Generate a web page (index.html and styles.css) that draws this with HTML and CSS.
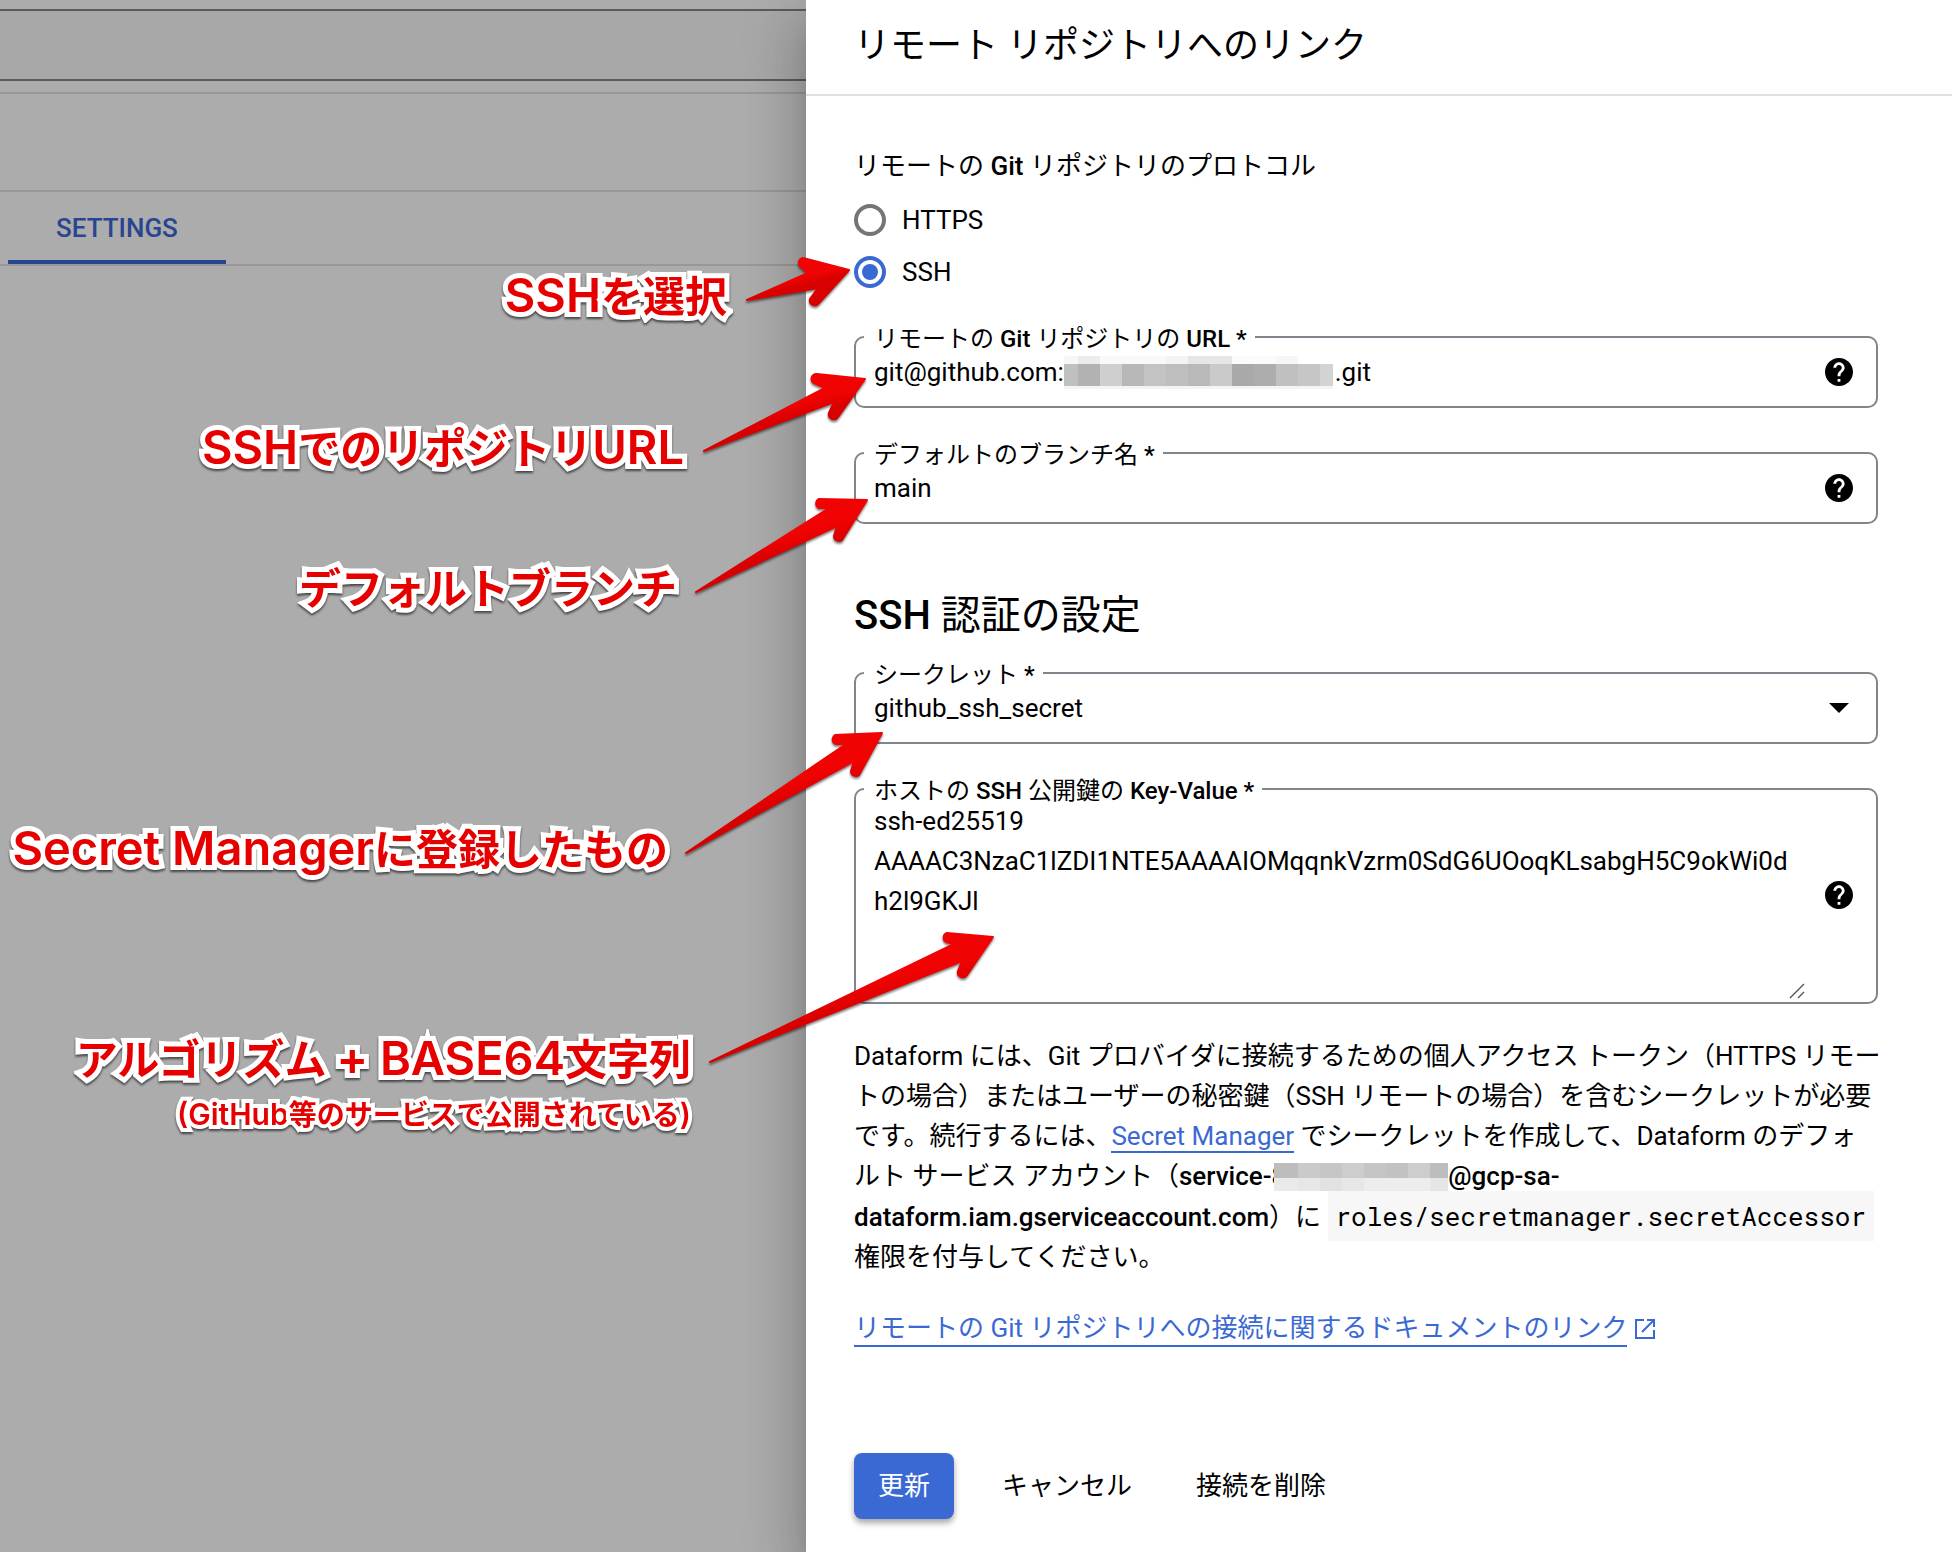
FILE: index.html
```html
<!DOCTYPE html>
<html lang="ja">
<head>
    <meta charset="UTF-8">
    <meta name="viewport" content="width=device-width, initial-scale=1.0">
    <title>リモート リポジトリへのリンク</title>
    <link rel="stylesheet" href="styles.css">
</head>
<body>
    <!-- Dimmed page behind the panel -->
    <main class="backdrop">
        <div class="search-row">
            <div class="search-box"></div>
        </div>
        <div class="toolbar"></div>
        <nav class="tabs">
            <a href="#" class="tab active">SETTINGS</a>
        </nav>

        <p class="note note-ssh"><span>SSH</span>を選択</p>
        <p class="note note-url"><span>SSH</span>でのリポジトリ<span>URL</span></p>
        <p class="note note-branch">デフォルトブランチ</p>
        <p class="note note-secret"><span>Secret Manager</span>に登録したもの</p>
        <p class="note note-key">アルゴリズム <span>+ BASE64</span>文字列</p>
        <p class="note note-key-sub"><span>(GitHub</span>等のサービスで公開されている<span>)</span></p>
    </main>

    <!-- Side panel -->
    <aside class="panel">
        <header class="panel-header">
            <h1>リモート リポジトリへのリンク</h1>
        </header>

        <form class="panel-body">
            <div class="protocol" role="radiogroup" aria-labelledby="protocol-label">
                <p id="protocol-label">リモートの <b>Git</b> リポジトリのプロトコル</p>
                <div class="radio">
                    <input type="radio" name="protocol" id="https">
                    <label for="https">HTTPS</label>
                </div>
                <div class="radio">
                    <input type="radio" name="protocol" id="ssh" checked>
                    <label for="ssh">SSH</label>
                </div>
            </div>

            <fieldset class="field">
                <legend><label for="repo-url">リモートの <b>Git</b> リポジトリの <b>URL *</b></label></legend>
                <div class="field-row">
                    <input type="text" id="repo-url" value="git@github.com:&nbsp;&nbsp;&nbsp;&nbsp;&nbsp;&nbsp;&nbsp;&nbsp;&nbsp;&nbsp;&nbsp;&nbsp;&nbsp;&nbsp;&nbsp;&nbsp;&nbsp;&nbsp;&nbsp;&nbsp;&nbsp;&nbsp;&nbsp;&nbsp;&nbsp;&nbsp;&nbsp;&nbsp;&nbsp;&nbsp;&nbsp;&nbsp;&nbsp;&nbsp;&nbsp;&nbsp;&nbsp;&nbsp;&nbsp;&nbsp;&nbsp;&nbsp;.git">
                    <svg class="mask mask-url" viewBox="0 0 269 33" shape-rendering="crispEdges" aria-hidden="true">
                        <rect width="14" height="8" fill="#f7f7f7"/>
                        <rect x="14" width="22" height="8" fill="#ececec"/>
                        <rect x="36" width="66" height="8" fill="#f9f9f9"/>
                        <rect x="102" width="22" height="8" fill="#f4f4f4"/>
                        <rect x="124" width="44" height="8" fill="#e6e6e6"/>
                        <rect x="168" width="44" height="8" fill="#fbfbfb"/>
                        <rect x="212" width="22" height="8" fill="#f6f6f6"/>
                        <rect y="30" width="269" height="3" fill="#f3f4f4"/>
                        <rect y="8" width="14" height="22" fill="#c0c0c0"/>
                        <rect x="14" y="8" width="22" height="22" fill="#b2b2b2"/>
                        <rect x="36" y="8" width="22" height="22" fill="#cfcfcf"/>
                        <rect x="58" y="8" width="22" height="22" fill="#b8b8b8"/>
                        <rect x="80" y="8" width="22" height="22" fill="#c3c3c3"/>
                        <rect x="102" y="8" width="22" height="22" fill="#bebebe"/>
                        <rect x="124" y="8" width="22" height="22" fill="#b9b9b9"/>
                        <rect x="146" y="8" width="22" height="22" fill="#cacaca"/>
                        <rect x="168" y="8" width="22" height="22" fill="#a9a9a9"/>
                        <rect x="190" y="8" width="22" height="22" fill="#adadad"/>
                        <rect x="212" y="8" width="22" height="22" fill="#c0c0c0"/>
                        <rect x="234" y="8" width="22" height="22" fill="#c6c6c6"/>
                        <rect x="256" y="8" width="13" height="22" fill="#d3d3d3"/>
                    </svg>
                    <button type="button" class="help" aria-label="ヘルプ">
                        <svg viewBox="2 2 20 20"><path d="M12 2C6.48 2 2 6.48 2 12s4.48 10 10 10 10-4.48 10-10S17.52 2 12 2zm1 17h-2v-2h2v2zm2.07-7.75l-.9.92C13.45 12.9 13 13.5 13 15h-2v-.5c0-1.1.45-2.1 1.17-2.83l1.24-1.26c.37-.36.59-.86.59-1.41 0-1.1-.9-2-2-2s-2 .9-2 2H8c0-2.21 1.79-4 4-4s4 1.79 4 4c0 .88-.36 1.68-.93 2.25z"/></svg>
                    </button>
                </div>
            </fieldset>

            <fieldset class="field">
                <legend><label for="branch">デフォルトのブランチ名 <b>*</b></label></legend>
                <div class="field-row">
                    <input type="text" id="branch" value="main">
                    <button type="button" class="help" aria-label="ヘルプ">
                        <svg viewBox="2 2 20 20"><path d="M12 2C6.48 2 2 6.48 2 12s4.48 10 10 10 10-4.48 10-10S17.52 2 12 2zm1 17h-2v-2h2v2zm2.07-7.75l-.9.92C13.45 12.9 13 13.5 13 15h-2v-.5c0-1.1.45-2.1 1.17-2.83l1.24-1.26c.37-.36.59-.86.59-1.41 0-1.1-.9-2-2-2s-2 .9-2 2H8c0-2.21 1.79-4 4-4s4 1.79 4 4c0 .88-.36 1.68-.93 2.25z"/></svg>
                    </button>
                </div>
            </fieldset>

            <h2><b>SSH</b> 認証の設定</h2>

            <fieldset class="field">
                <legend><label for="secret">シークレット <b>*</b></label></legend>
                <div class="field-row">
                    <select id="secret">
                        <option>github_ssh_secret</option>
                    </select>
                    <svg class="caret" viewBox="0 0 20 10" aria-hidden="true"><path d="M0 0h20L10 10z"/></svg>
                </div>
            </fieldset>

            <fieldset class="field field-area">
                <legend><label for="host-key">ホストの <b>SSH</b> 公開鍵の <b>Key-Value *</b></label></legend>
                <div class="field-row">
                    <textarea id="host-key" spellcheck="false">ssh-ed25519 AAAAC3NzaC1lZDI1NTE5AAAAIOMqqnkVzrm0SdG6UOoqKLsabgH5C9okWi0dh2l9GKJl</textarea>
                    <svg class="grip" viewBox="0 0 16 16" aria-hidden="true"><path d="M1 15L15 1M9 15L15 9" stroke="#555555" stroke-width="1.4"/></svg>
                    <button type="button" class="help" aria-label="ヘルプ">
                        <svg viewBox="2 2 20 20"><path d="M12 2C6.48 2 2 6.48 2 12s4.48 10 10 10 10-4.48 10-10S17.52 2 12 2zm1 17h-2v-2h2v2zm2.07-7.75l-.9.92C13.45 12.9 13 13.5 13 15h-2v-.5c0-1.1.45-2.1 1.17-2.83l1.24-1.26c.37-.36.59-.86.59-1.41 0-1.1-.9-2-2-2s-2 .9-2 2H8c0-2.21 1.79-4 4-4s4 1.79 4 4c0 .88-.36 1.68-.93 2.25z"/></svg>
                    </button>
                </div>
            </fieldset>

            <p class="description">Dataform には、Git プロバイダに接続するための個人アクセス トークン（HTTPS リモートの場合）またはユーザーの秘密鍵（SSH リモートの場合）を含むシークレットが必要です。続行するには、<a href="#">Secret Manager</a> でシークレットを作成して、Dataform のデフォルト サービス アカウント（<b>service-8<svg class="mask mask-account" viewBox="0 0 174 28" shape-rendering="crispEdges" aria-hidden="true">
                <rect width="24" height="15" fill="#bdbdbd"/>
                <rect x="24" width="22" height="15" fill="#cacaca"/>
                <rect x="46" width="22" height="15" fill="#c6c6c6"/>
                <rect x="68" width="22" height="15" fill="#cdcdcd"/>
                <rect x="90" width="22" height="15" fill="#c5c5c5"/>
                <rect x="112" width="22" height="15" fill="#c2c2c2"/>
                <rect x="134" width="22" height="15" fill="#cdcdcd"/>
                <rect x="156" width="18" height="15" fill="#bdbdbd"/>
                <rect y="15" width="24" height="13" fill="#eaeaea"/>
                <rect x="24" y="15" width="22" height="13" fill="#e7e7e7"/>
                <rect x="46" y="15" width="22" height="13" fill="#e2e2e2"/>
                <rect x="68" y="15" width="22" height="13" fill="#e7e7e7"/>
                <rect x="90" y="15" width="66" height="13" fill="#ededed"/>
                <rect x="156" y="15" width="18" height="13" fill="#e6e6e6"/>
            </svg>@gcp-sa-dataform.iam.gserviceaccount.com</b>）に <code>roles/secretmanager.secretAccessor</code> 権限を付与してください。</p>

            <p class="doc-link">
                <a href="#">リモートの Git リポジトリへの接続に関するドキュメントのリンク</a>
                <svg viewBox="0 0 20 20" aria-hidden="true"><path d="M9 1H1v18h18v-8M12 1h7v7M19 1L7 13" fill="none" stroke="currentColor" stroke-width="2"/></svg>
            </p>

            <div class="actions">
                <button type="submit" class="btn btn-primary">更新</button>
                <button type="button" class="btn">キャンセル</button>
                <button type="button" class="btn">接続を削除</button>
            </div>
        </form>
    </aside>

    <!-- Arrows from the notes to the fields -->
    <svg class="arrows" width="1010" height="1080" viewBox="0 0 1010 1080" aria-hidden="true">
        <defs>
            <linearGradient id="red" x1="0.4" y1="0.3" x2="0.6" y2="0.7">
                <stop offset="0.3" stop-color="#f20303"/>
                <stop offset="0.7" stop-color="#d90000"/>
            </linearGradient>
        </defs>
        <path d="M747 300L808 273L801 267A5 5 0 0 1 803 258L849 270L819 303A5 5 0 0 1 810 299L818 288Z"/>
        <path d="M704 451L825 388L816 384A5 5 0 0 1 817 374L865 379L838 417A5 5 0 0 1 829 413L834 402Z"/>
        <path d="M696 592L829 508L819 508A5 5 0 0 1 819 499L867 500L842 540A5 5 0 0 1 834 536L837 526Z"/>
        <path d="M686 853L846 744L836 744A5 5 0 0 1 835 735L882 733L859 775A5 5 0 0 1 851 771L854 761Z"/>
        <path d="M710 1062L954 944L946 942A5 5 0 0 1 947 933L993 937L967 975A5 5 0 0 1 958 971L962 961Z"/>
    </svg>
</body>
</html>
```

FILE: styles.css
```css
/* General Reset */
* {
    margin: 0;
    padding: 0;
    box-sizing: border-box;
}

body {
    position: relative;
    display: flex;
    min-height: 100vh;
    font-family: Roboto, "Noto Sans CJK JP", sans-serif;
    font-size: 26px;
    line-height: 40px;
    color: #000000;
    background: #acacac;
    overflow-x: hidden;
}

b {
    font-weight: 500;
}

a {
    color: #3b69d3;
    text-decoration: none;
    border-bottom: 2px solid #3b69d3;
}

input,
select,
textarea,
button {
    font: inherit;
    color: inherit;
    background: none;
    border: none;
    outline: none;
}

/* Backdrop */
.backdrop {
    position: relative;
    flex: 806;
    min-width: 0;
}

.search-row {
    padding: 9px 0 11px;
    border-bottom: 2px solid #989898;
}

.search-box {
    height: 72px;
    background: #a8a8a8;
    border: solid #5a5b5f;
    border-width: 2px 0;
}

.toolbar {
    height: 98px;
    border-bottom: 2px solid #989898;
}

.tabs {
    display: flex;
    padding-left: 8px;
    border-bottom: 2px solid #989898;
}

.tab {
    padding: 16px 48px 12px;
    color: #28458f;
    font-weight: 500;
    border-bottom: 4px solid #28458f;
}

/* Notes */
.note {
    position: absolute;
    font-family: Inter, "Noto Sans CJK JP", sans-serif;
    font-size: 42px;
    font-weight: 700;
    line-height: 60px;
    white-space: nowrap;
    color: #e60000;
    -webkit-text-stroke: 10px #ffffff;
    paint-order: stroke fill;
    stroke-linejoin: round;
    filter: drop-shadow(0 2px 1px rgba(0, 0, 0, 0.6));
}

.note span {
    font-size: 47px;
    font-weight: 600;
}

.note-ssh {
    top: 265px;
    right: 79px;
}

.note-url {
    top: 417px;
    right: 122px;
}

.note-branch {
    top: 559px;
    right: 129px;
}

.note-secret {
    top: 818px;
    right: 138px;
}

.note-key {
    top: 1028px;
    right: 115px;
}

.note-key-sub {
    top: 1084px;
    right: 115px;
    font-size: 28px;
    -webkit-text-stroke-width: 8px;
}

.note-key-sub span {
    font-size: 30px;
}

.arrows {
    position: absolute;
    top: 0;
    left: 0;
    z-index: 2;
    pointer-events: none;
    fill: url(#red);
    stroke: url(#red);
    stroke-width: 2;
    stroke-linejoin: round;
    filter: drop-shadow(0 2px 1px rgba(0, 0, 0, 0.5));
}

/* Panel */
.panel {
    position: relative;
    flex: 1146;
    min-width: 0;
    background: #ffffff;
    box-shadow: 0 16px 20px -10px rgba(0, 0, 0, 0.2),
        0 32px 48px 4px rgba(0, 0, 0, 0.14),
        0 12px 60px 10px rgba(0, 0, 0, 0.12);
}

.panel-header {
    padding: 24px 48px 26px;
    border-bottom: 2px solid #e0e0e0;
}

.panel-header h1 {
    font-size: 36px;
    font-weight: 400;
    line-height: 44px;
}

.panel-body {
    padding: 54px 74px 32px 48px;
}

.protocol {
    display: flex;
    flex-direction: column;
    gap: 20px;
    margin-bottom: 37px;
    line-height: 32px;
}

.protocol p {
    margin-bottom: 2px;
}

.radio {
    display: flex;
    align-items: center;
    gap: 16px;
}

.radio input {
    appearance: none;
    width: 32px;
    height: 32px;
    border: 4px solid #757575;
    border-radius: 50%;
}

.radio input:checked {
    padding: 4px;
    border-color: #3b69d3;
    background: #3b69d3 content-box;
}

/* Form fields */
.field {
    min-width: 0;
    margin-bottom: 33px;
    padding: 0 23px 11px 8px;
    border: 2px solid #80868b;
    border-radius: 10px;
}

.field legend {
    padding: 4px 8px 0 10px;
    font-size: 24px;
    line-height: 20px;
}

.field-row {
    position: relative;
    display: flex;
    align-items: center;
    gap: 20px;
    padding-left: 10px;
}

.field input,
.field select {
    flex: 1;
    min-width: 0;
    height: 46px;
    appearance: none;
}

.field-area {
    margin-bottom: 32px;
    padding-bottom: 3px;
}

.field textarea {
    flex: 1;
    min-width: 0;
    height: 198px;
    padding-right: 12px;
    resize: vertical;
    overflow: hidden;
    overflow-wrap: break-word;
}

.field textarea::-webkit-resizer {
    display: none;
}

.grip {
    position: absolute;
    right: 48px;
    bottom: 0;
    width: 16px;
    height: 16px;
    pointer-events: none;
}

.help {
    width: 28px;
    height: 28px;
    cursor: pointer;
}

.help svg {
    display: block;
}

.field-area .help {
    margin-bottom: 10px;
}

.caret {
    width: 20px;
    height: 10px;
    margin-right: 4px;
}

.mask-url {
    position: absolute;
    top: 7px;
    left: 200px;
    width: 269px;
    height: 33px;
}

.mask-account {
    width: 174px;
    height: 28px;
    margin-left: -12px;
    vertical-align: -6px;
}

h2 {
    margin: 68px 0 21px;
    font-size: 40px;
    font-weight: 400;
    line-height: 48px;
}

/* Description */
.description {
    margin: 0 -4px 34px 0;
}

code {
    padding: 8px;
    font-family: "Roboto Mono", "Liberation Mono", monospace;
    font-size: 26px;
    background: #f7f7f7;
}

.doc-link {
    display: flex;
    align-items: center;
    gap: 8px;
    margin-bottom: 106px;
    color: #3b69d3;
}

.doc-link a {
    line-height: 34px;
}

.doc-link svg {
    width: 20px;
    height: 20px;
}

/* Actions */
.actions {
    display: flex;
    gap: 16px;
}

.btn {
    padding: 13px 24px;
    border-radius: 8px;
    cursor: pointer;
}

.btn-primary {
    margin-right: 8px;
    color: #ffffff;
    background: #3b69d3;
    box-shadow: 0 4px 6px rgba(0, 0, 0, 0.35);
}
```
